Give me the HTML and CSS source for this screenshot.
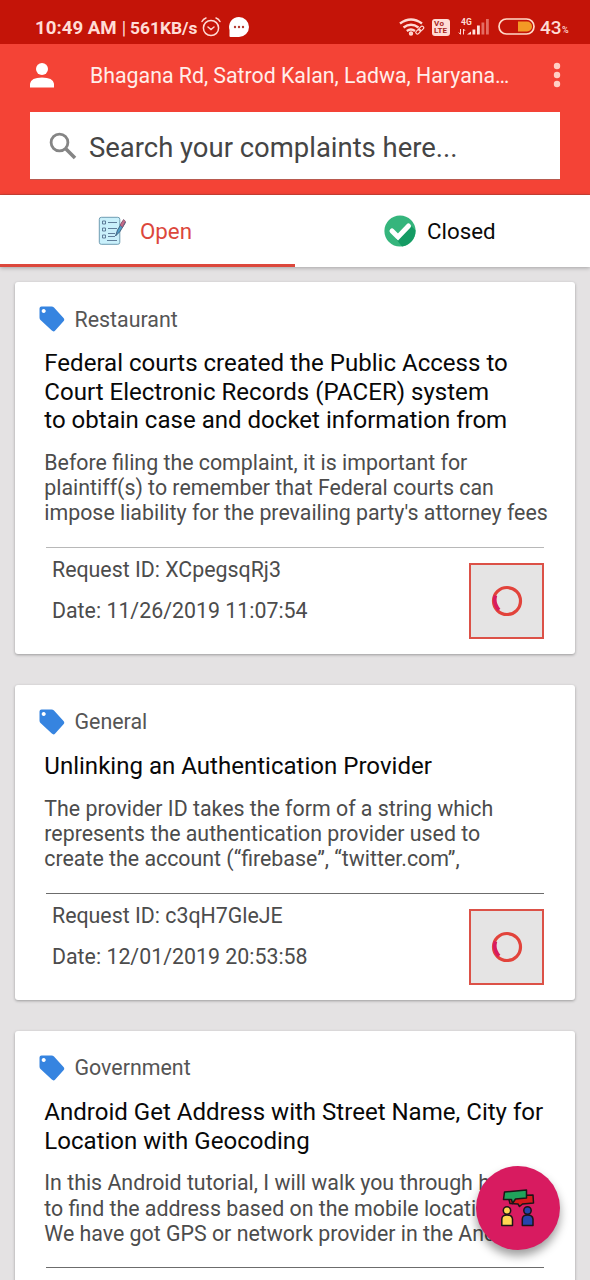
FILE: index.html
```html
<!DOCTYPE html>
<html lang="en">
<head>
<meta charset="utf-8">
<title>Complaints</title>
<link rel="stylesheet" href="styles.css">
</head>
<body>
<svg class="defs" width="0" height="0">
  <symbol id="tag" viewBox="0 0 26 26"><path fill="#3684e0" fill-rule="evenodd" d="M2.500 0.500H12.500Q14 0.500 15 1.500L24.500 12Q26 13.700 24.500 15.200L16.200 24.500Q14.600 26.200 12.800 24.600L1.500 14Q.5 13 .5 11.500V2.500Q.5 .5 2.500 .5ZM4.700 2.900a2 2 0 1 0 .01 0Z"/></symbol>
  <symbol id="loader" viewBox="0 0 32 32"><circle cx="16" cy="16" r="13.500" fill="none" stroke="#e2433b" stroke-width="3.200"/><path d="M4.500 10.500Q2 18 8 25" fill="none" stroke="#d81b60" stroke-width="3.600"/></symbol>
</svg>
<div class="screen">
  <div class="status">
    <span class="clock">10:49 AM</span><span class="bar">|</span><span class="speed">561KB/s</span>
    <svg class="alarm" width="20" height="20" viewBox="0 0 20 20" fill="none" stroke="#ffd9d3" stroke-width="1.500" stroke-linecap="round"><circle cx="10" cy="11" r="7.600"/><path d="M7 10l3 2.500 3-2.500M1 4.500Q2.200 2 5 1M19 4.500Q17.800 2 15 1"/></svg>
    <svg class="chat" width="20" height="20" viewBox="0 0 20 20"><path fill="#fff" d="M10 0a10 10 0 1 1 0 20H1.500Q.3 20 .5 18.500V13A10 10 0 0 1 10 0Z"/><g fill="#b33a30"><circle cx="6" cy="10" r="1.200"/><circle cx="10" cy="10" r="1.200"/><circle cx="14" cy="10" r="1.200"/></g></svg>
    <span class="grow"></span>
    <svg class="wifi" width="26" height="18" viewBox="0 0 26 18" fill="none" stroke="#ffd9d3" stroke-width="2.400"><path d="M1 5.500Q12 -2.500 23 5.500M4.500 9.500Q12 4 19.500 9.500M7.800 13Q12 9.800 16 13"/><circle cx="12" cy="15.500" r="1" /><g stroke-width="1.200"><rect x="16.500" y="12" width="5.500" height="3.200" rx="1.500" transform="rotate(-45 19.200 13.600)"/><rect x="19.500" y="9" width="5.500" height="3.200" rx="1.500" transform="rotate(-45 22.200 10.600)"/></g></svg>
    <span class="volte"><b class="vo">Vo</b><b>LTE</b></span>
    <svg class="signal" width="32" height="18" viewBox="0 0 32 18"><text x="3" y="6.500" class="net">4G</text><path d="M2.500 11v5M0.800 14.500l1.700 2M5.500 16.500v-5.500l1.500 1.800" stroke="#ffd9d3" fill="none"/><g fill="#ffe4df"><path d="M9 16.500l4-3v3Z"/><rect x="14.500" y="11.500" width="2.800" height="5"/><rect x="19" y="7.500" width="2.800" height="9"/></g><g fill="#e46d63"><rect x="23.500" y="4.500" width="2.800" height="12"/><rect x="28" y="1" width="2.800" height="15.500"/></g></svg>
    <svg class="battery" width="37" height="18" viewBox="0 0 37 18"><rect x="1" y="1" width="35" height="15" rx="7.500" fill="none" stroke="#ffd9c8" stroke-width="1.700"/><path d="M20 3.500h9a5 5 0 0 1 0 10h-9Z" fill="#f39a25"/></svg>
    <span class="percent">43</span><span class="sign">%</span>
  </div>
  <header class="header">
    <div class="location">
      <svg class="person" width="24" height="25" viewBox="0 0 24 25"><circle cx="12" cy="6" r="6" fill="#fff"/><path fill="#fff" d="M0 24.500V20.500Q1 14.500 12 14.500T24 20.500V24.500Z"/></svg>
      <span class="address">Bhagana Rd, Satrod Kalan, Ladwa, Haryana…</span>
      <svg class="more" width="8" height="26" viewBox="0 0 8 26" fill="#ffd0c4"><circle cx="4" cy="4" r="3.200"/><circle cx="4" cy="13" r="3.200"/><circle cx="4" cy="22" r="3.200"/></svg>
    </div>
    <div class="search">
      <svg width="28" height="28" viewBox="0 0 28 28" fill="none" stroke="#858585"><circle cx="10.500" cy="10.500" r="8.400" stroke-width="2.800"/><path d="M17 17l9 9" stroke-width="3.500"/></svg>
      <span class="placeholder">Search your complaints here...</span>
    </div>
  </header>
  <nav class="tabs">
    <div class="tab active">
      <svg width="28" height="30" viewBox="0 0 28 30"><rect x="1.300" y="1.300" width="20.500" height="27" rx="2" fill="#c9f0fb" stroke="#6f9db2" stroke-width="1"/><g fill="none" stroke="#54708e" stroke-width=".9"><path d="M10 6.500h9M10 12.500h9M10 17.500h7M10 20.500h7M9 24.500h10" /><path d="M4.500 5h3v3h-3ZM4.500 12h3v3h-3ZM4.500 19h3v3h-3Z"/></g><path d="M17.500 20l2-6L25 5l2.500 1.500-5.500 9Z" fill="#4e9ec8" stroke="#34516f" stroke-width=".8"/><path d="M22 9l3.500-5.500 2 1.800-3 6Z" fill="#c66c88" stroke="#784c6b" stroke-width=".7"/></svg>
      <span class="open">Open</span>
    </div>
    <div class="tab">
      <svg width="32" height="32" viewBox="0 0 32 32"><circle cx="16" cy="16" r="15.600" fill="#35b57c"/><path d="M26 10L31.400 15A15.600 15.600 0 0 1 18 31.400L12 24Z" fill="#159b64"/><path d="M8 16l6 6L24.500 11" fill="none" stroke="#fff" stroke-width="5" stroke-linecap="round"/></svg>
      <span class="closed">Closed</span>
    </div>
  </nav>
  <main class="list">
    <article class="card">
      <div class="category"><svg width="26" height="26"><use href="#tag"/></svg><span>Restaurant</span></div>
      <h2 class="title">Federal courts created the Public Access to<br>Court Electronic Records (PACER) system<br>to obtain case and docket information from</h2>
      <p class="body">Before filing the complaint, it is important for<br>plaintiff(s) to remember that Federal courts can<br>impose liability for the prevailing party's attorney fees</p>
      <div class="foot light">
        <div class="meta"><span>Request ID: XCpegsqRj3</span><span>Date: 11/26/2019 11:07:54</span></div>
        <div class="thumb"><svg width="32" height="32"><use href="#loader"/></svg></div>
      </div>
    </article>
    <article class="card">
      <div class="category"><svg width="26" height="26"><use href="#tag"/></svg><span>General</span></div>
      <h2 class="title">Unlinking an Authentication Provider</h2>
      <p class="body">The provider ID takes the form of a string which<br>represents the authentication provider used to<br>create the account (“firebase”, “twitter.com”,</p>
      <div class="foot">
        <div class="meta"><span>Request ID: c3qH7GleJE</span><span>Date: 12/01/2019 20:53:58</span></div>
        <div class="thumb"><svg width="32" height="32"><use href="#loader"/></svg></div>
      </div>
    </article>
    <article class="card">
      <div class="category"><svg width="26" height="26"><use href="#tag"/></svg><span>Government</span></div>
      <h2 class="title">Android Get Address with Street Name, City for<br>Location with Geocoding</h2>
      <p class="body">In this Android tutorial, I will walk you through how<br>to find the address based on the mobile location.<br>We have got GPS or network provider in the And</p>
      <div class="foot"></div>
    </article>
  </main>
  <div class="fab">
    <svg width="34" height="38" viewBox="0 0 34 38" stroke="#1c1517" stroke-width="1.500" stroke-linejoin="round"><path d="M7 7l25-1 .5 8-11 1-3 2.500-1.500-2.500-8-.5Z" fill="#d7191c"/><path d="M3.500 3l22-2v8l-11 1-3 4.500-1-4H2.500Z" fill="#20a35b"/><g fill="#ffd653"><circle cx="6" cy="21.500" r="3.700"/><path d="M.8 36.500V30Q1 26 6 26t5.500 4v6.500Z"/></g><g fill="#2545ad"><circle cx="26.500" cy="21.500" r="3.700"/><path d="M21.300 36.500V30Q21.500 26 26.500 26t5.500 4v6.500Z"/></g></svg>
  </div>
</div>
</body>
</html>
```
FILE: styles.css
```css
* { box-sizing: border-box; }
body { margin: 0; font-family: Roboto, "Noto Sans", sans-serif; }
svg { display: block; flex: none; }
.defs { position: absolute; }
.screen { position: relative; width: 590px; height: 1280px; overflow: hidden; background: #e4e2e3; white-space: nowrap; }

.status { display: flex; align-items: center; height: 44px; padding: 10px 21px 0 35px; background: #c41408; color: #ffdcd6; }
.clock, .speed { font-size: 18.700px; font-weight: 700; padding-top: 1px; }
.clock { width: 83px; }
.bar { width: 12px; text-align: center; font-size: 18px; }
.speed { width: 68px; font-size: 17.400px; }
.alarm { margin-left: 3px; }
.chat { margin-left: 8px; }
.grow { flex: 1; }
.wifi { margin-right: 7px; }
.volte { display: flex; flex-direction: column; width: 18px; height: 17px; padding: 1px 0 0 2px; margin-right: 8px; border-radius: 3px; background: #ffdcd6; color: #a8251c; font-size: 8px; line-height: 7.500px; }
.vo { letter-spacing: .5px; }
.signal { margin-right: 8px; }
.net { fill: #ffdcd6; font-size: 8.500px; font-weight: 700; }
.battery { margin-right: 5px; }
.percent { font-size: 19px; font-weight: 500; width: 22px; }
.sign { width: 7px; padding-top: 5px; font-size: 9px; font-weight: 500; }

.header { height: 151px; padding: 0 30px; background: #f44336; border-bottom: 1px solid #cf4236; }
.location { display: flex; align-items: center; height: 68px; padding-bottom: 6px; }
.address { margin-left: 36px; width: 420px; color: #ffeeea; font-size: 21.300px; padding-top: 1px; }
.more { margin-left: auto; margin-right: -1px; }
.search { display: flex; align-items: center; height: 68px; padding-left: 19px; background: #fff; border-bottom: 1px solid #b85a50; }
.placeholder { margin-left: 12px; padding-top: 4px; color: #454545; font-size: 27.450px; }

.tabs { position: relative; display: flex; height: 72px; background: #fff; box-shadow: 0 1px 4px rgba(0,0,0,.28); }
.tab { display: flex; align-items: center; flex: none; width: 295px; padding-left: 89px; font-size: 22.300px; color: #0a0a0a; }
.active { padding-left: 98px; padding-top: 3px; color: #dc473c; border-bottom: 3px solid #dc473c; }
.open { margin-left: 14px; }
.closed { margin-left: 11px; padding-top: 0; }

.list { display: flex; flex-direction: column; gap: 31px; padding: 15px 15px 0; }
.card { flex: none; padding: 24px 31px 15px 24px; background: #fff; border-radius: 3px; box-shadow: 0 1px 3px rgba(0,0,0,.32); }
.category { display: flex; align-items: center; height: 26px; gap: 9.500px; color: #555; font-size: 21.400px; }
.title { margin: 17.300px 0 0 5.300px; color: #080808; font-size: 24.050px; font-weight: 400; line-height: 28.400px; }
.body { margin: 15.500px 0 0 5.300px; color: #4c4c4c; font-size: 21.350px; line-height: 25.200px; }
.foot { display: flex; justify-content: space-between; height: 92px; margin: 21.200px 0 0 7px; padding-top: 15px; border-top: 1px solid #6c6c6c; }
.light { border-color: #b8b8b8; }
.meta { display: flex; flex-direction: column; gap: 15px; margin: -6px 0 0 6px; color: #4c4c4c; font-size: 21.350px; line-height: 26px; }
.thumb { display: grid; place-items: center; width: 75px; height: 76px; background: #e5e4e4; border: 2px solid #dc5147; }

.fab { position: absolute; left: 476px; top: 1166px; display: grid; place-items: center; width: 84px; height: 84px; border-radius: 50%; background: #d81b60; box-shadow: 0 6px 10px rgba(0,0,0,.38); }
```
